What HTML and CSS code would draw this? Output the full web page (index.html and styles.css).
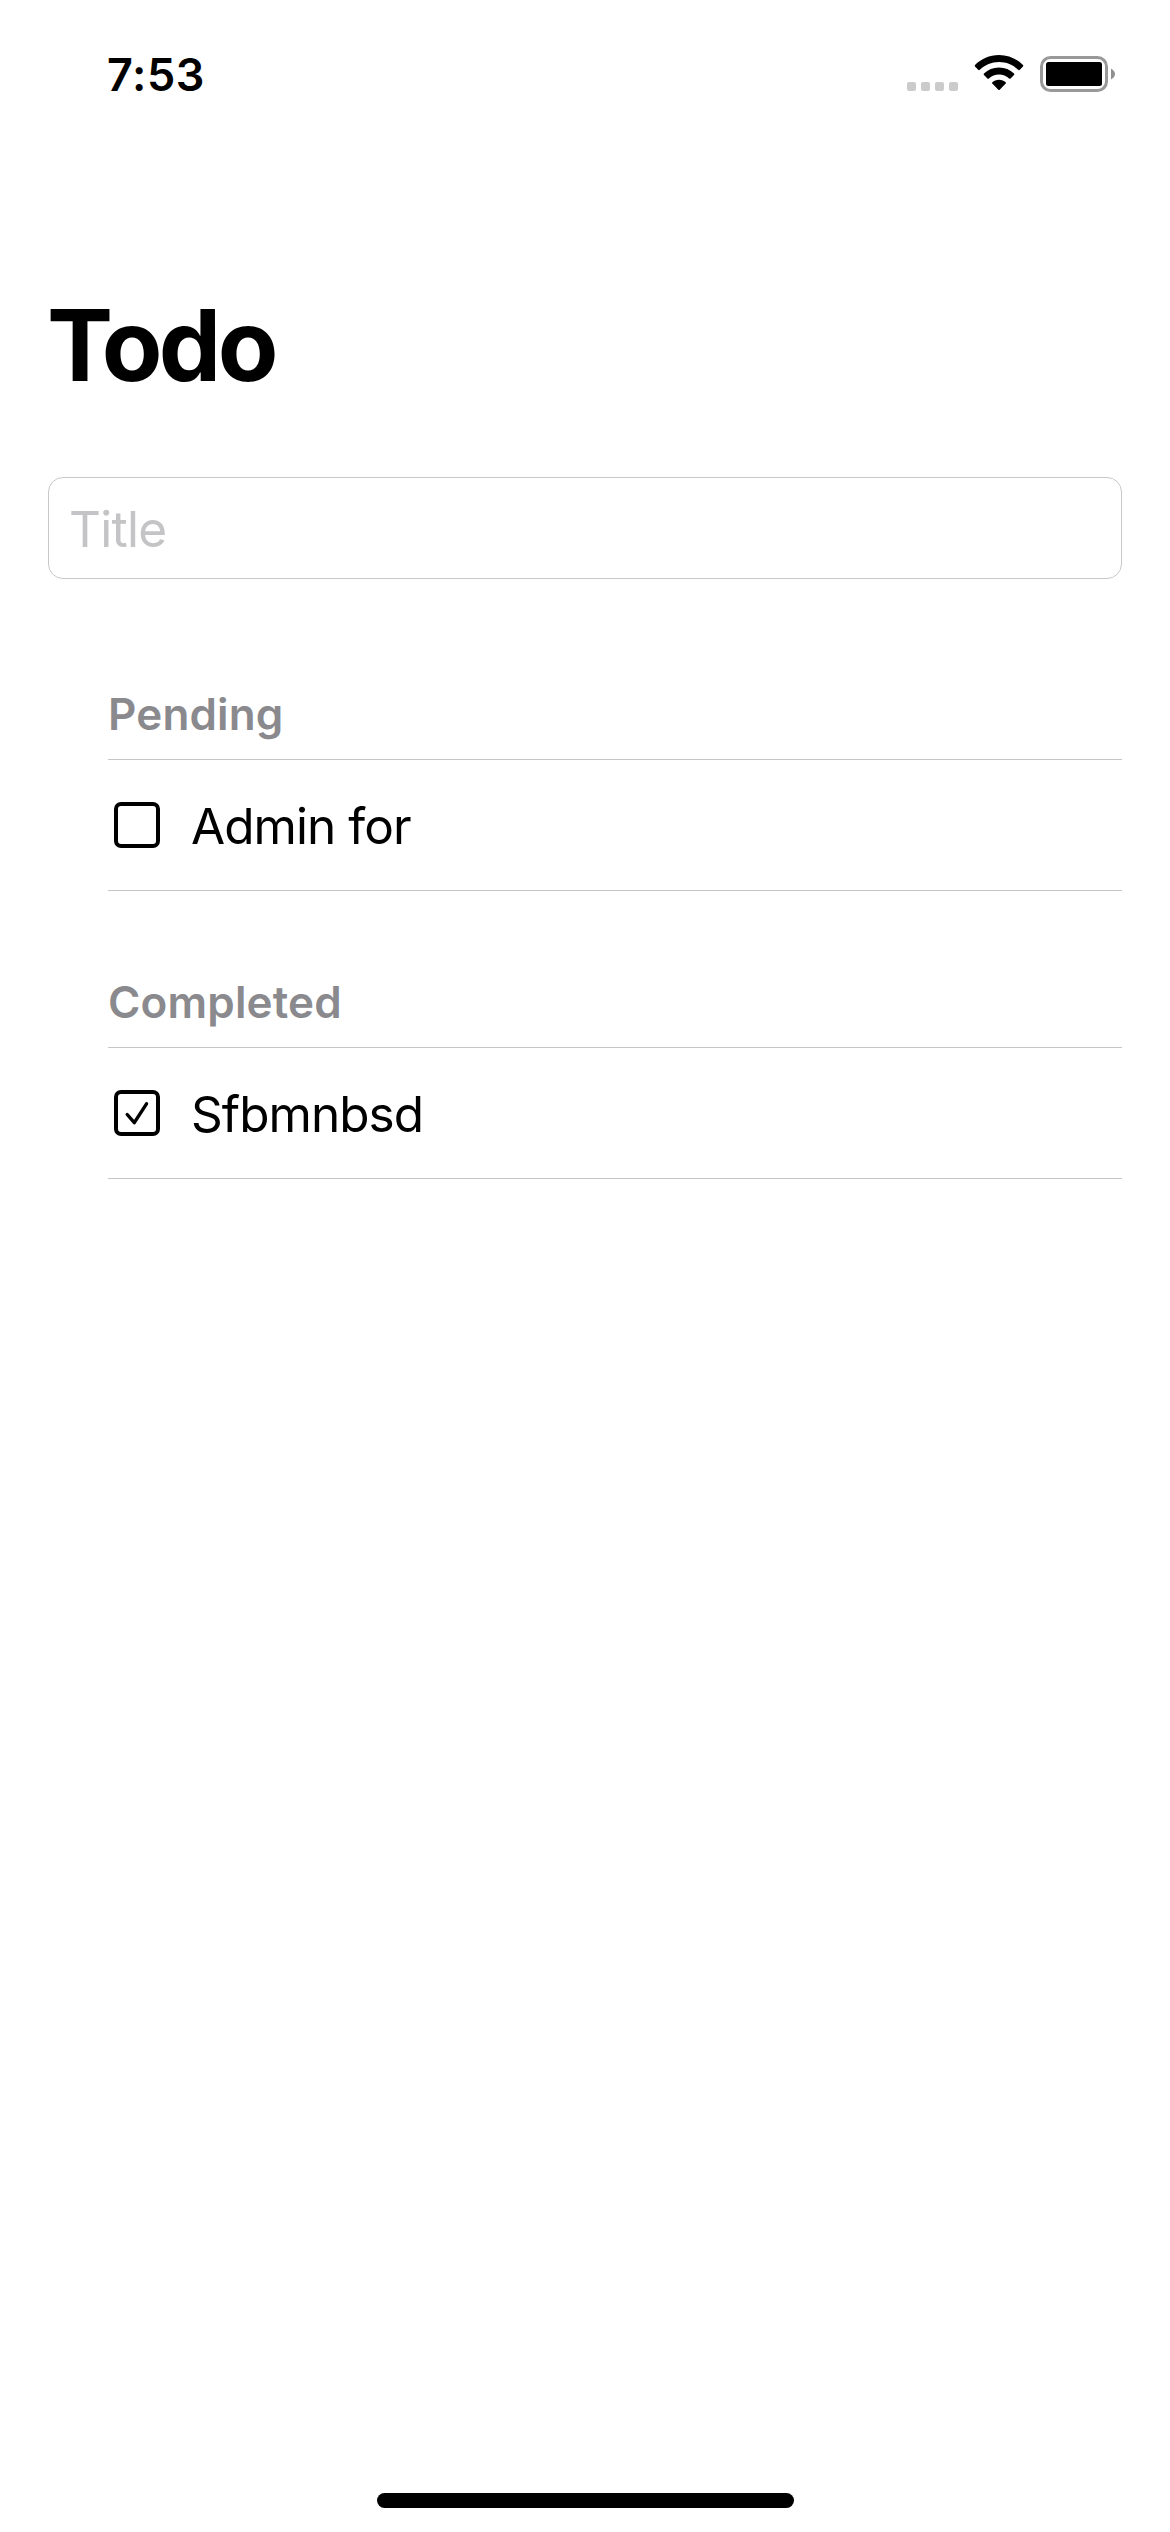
FILE: index.html
```html
<!DOCTYPE html>
<html lang="en">
<head>
<meta charset="utf-8">
<title>Todo</title>
<link rel="stylesheet" href="styles.css">
</head>
<body>
<div class="screen">
  <header class="status">
    <span class="time">7:53</span>
    <svg class="indicators" width="210" height="40" viewBox="0 0 210 40" aria-hidden="true">
      <g fill="#cbcbcb">
        <rect x="2" y="28" width="9" height="9" rx="2"/>
        <rect x="16" y="28" width="9" height="9" rx="2"/>
        <rect x="30" y="28" width="9" height="9" rx="2"/>
        <rect x="44" y="28" width="9" height="9" rx="2"/>
      </g>
      <g>
        <path d="M94 1C103.500 1 112 5 118 11Q118.500 11.700 118 12.400L114.800 15.800Q114 16.500 113.200 15.800C108 10.800 101.500 8 94 8S80 10.800 74.800 15.800Q74 16.500 73.200 15.800L70 12.400Q69.500 11.700 70 11C76 5 84.500 1 94 1Z"/>
        <path d="M94 13.500C100 13.500 105 15.800 109 19.500Q109.800 20.300 109 21L105.600 24.500Q104.900 25 104.100 24.500C101.300 22 98 20.500 94 20.500S86.700 22 83.900 24.500Q83.100 25 82.400 24.500L79 21Q78.200 20.300 79 19.500C83 15.800 88 13.500 94 13.500Z"/>
        <path d="M94 25.800C96.700 25.800 99 26.700 100.700 28.200Q101.300 28.900 100.700 29.600L94.700 35.800Q94 36.400 93.300 35.800L87.300 29.600Q86.700 28.900 87.300 28.200C89 26.700 91.300 25.800 94 25.800Z"/>
      </g>
      <rect x="136.500" y="3.500" width="65" height="33" rx="9" fill="none" stroke="#999" stroke-width="3"/>
      <rect x="141" y="8" width="56" height="24" rx="2.500"/>
      <path d="M206 14.500Q210 17 210 20T206 25.500Z" fill="#8f8f8f"/>
    </svg>
  </header>
  <main class="content">
    <h1 class="heading">Todo</h1>
    <input class="field" type="text" placeholder="Title" aria-label="Title">
    <div class="lists">
      <section class="group">
        <h2 class="label">Pending</h2>
        <div class="item">
          <svg class="check" width="46" height="46" viewBox="0 0 46 46" aria-hidden="true"><rect x="2" y="2" width="42" height="42" rx="5"/></svg>
          <span class="text">Admin for</span>
        </div>
      </section>
      <section class="group">
        <h2 class="label">Completed</h2>
        <div class="item">
          <svg class="check" width="46" height="46" viewBox="0 0 46 46" aria-hidden="true"><rect x="2" y="2" width="42" height="42" rx="5"/><path d="M13.200 24.500L20.300 32.700L32.500 13.800" stroke-width="3.400"/></svg>
          <span class="text">Sfbmnbsd</span>
        </div>
      </section>
    </div>
  </main>
  <div class="home"></div>
</div>
</body>
</html>
```
FILE: styles.css
```css
* { box-sizing: border-box; }
body {
  margin: 0;
  background: #fff;
  color: #000;
  font-family: Inter, "Liberation Sans", sans-serif;
}
.screen {
  display: flex;
  flex-direction: column;
  width: 1170px;
  height: 2532px;
  padding-bottom: 24px;
  overflow: hidden;
}
.status {
  display: flex;
  justify-content: space-between;
  align-items: center;
  height: 149px;
  padding: 0 55px 0 107px;
}
.time {
  font-size: 45px;
  font-weight: 600;
  letter-spacing: 0.600px;
  line-height: 60px;
}
.indicators { margin-bottom: 1px; }
.content {
  display: flex;
  flex-direction: column;
  padding: 136px 48px 0;
}
.heading {
  margin: 0 0 0 -1px;
  font-size: 99px;
  font-weight: 700;
  letter-spacing: -3.600px;
  line-height: 120px;
}
.field {
  height: 102px;
  margin-top: 72px;
  padding: 2px 20px 0;
  border: 1px solid #c8c8c8;
  border-radius: 15px;
  background: #fff;
  font: 400 49.500px/60px Inter, "Liberation Sans", sans-serif;
  letter-spacing: -0.700px;
  outline: none;
}
.field::placeholder { color: #c4c4c6; opacity: 1; }
.lists {
  display: flex;
  flex-direction: column;
  gap: 66px;
  padding: 90px 0 0 60px;
}
.label {
  height: 91px;
  margin: 0;
  border-bottom: 1px solid #c6c6c8;
  color: #8a8a8e;
  font-size: 44px;
  font-weight: 600;
  letter-spacing: 0.150px;
  line-height: 90px;
}
.item {
  display: flex;
  align-items: center;
  gap: 31px;
  height: 131px;
  padding-left: 6px;
  border-bottom: 1px solid #c6c6c8;
}
.check {
  flex: none;
  fill: none;
  stroke: #000;
  stroke-width: 4;
  stroke-linecap: round;
  stroke-linejoin: round;
}
.text {
  padding-top: 1px;
  font-size: 49.500px;
  letter-spacing: -0.950px;
  line-height: 60px;
}
.home {
  width: 417px;
  height: 15px;
  margin: auto auto 0;
  border-radius: 8px;
  background: #000;
}
```
